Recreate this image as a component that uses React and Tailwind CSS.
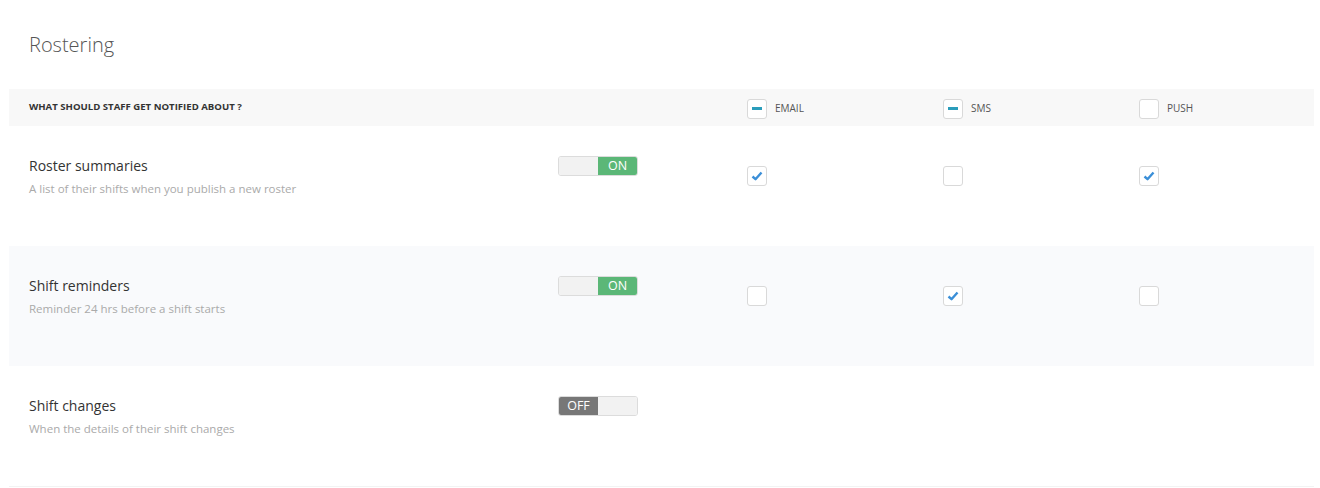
import React from 'react';

const rows = [
  {
    id: 'summaries',
    title: 'Roster summaries',
    desc: 'A list of their shifts when you publish a new roster',
    on: true,
    channels: [true, false, true],
    shaded: false
  },
  {
    id: 'reminders',
    title: 'Shift reminders',
    desc: 'Reminder 24 hrs before a shift starts',
    on: true,
    channels: [false, true, false],
    shaded: true
  },
  {
    id: 'changes',
    title: 'Shift changes',
    desc: 'When the details of their shift changes',
    on: false,
    channels: null,
    shaded: false
  }
];

const Checkbox = ({ state }) => (
  <span className="flex h-[20px] w-[20px] items-center justify-center rounded-[3px] border border-[#d9d9d9] bg-white">
    {state === 'check' && (
      <svg width="12" height="10" viewBox="0 0 12 10">
        <path d="M1.5 5.5 L4.5 8.2 L10.5 1.5" fill="none" stroke="#3b8fd8" strokeWidth="2.4" strokeLinejoin="round" />
      </svg>
    )}
    {state === 'minus' && <span className="h-[3px] w-[10px] bg-[#2a9dbb]" />}
  </span>
);

const Toggle = ({ on }) => (
  <div className="flex h-[20px] w-[80px] overflow-hidden rounded-[3px] border border-[#dcdcdc] text-[12.5px] leading-none text-white">
    {on ? (
      <>
        <span className="flex-1 bg-[#f2f2f2]" />
        <span className="flex flex-1 items-center justify-center bg-[#5bb777]">ON</span>
      </>
    ) : (
      <>
        <span className="flex flex-1 items-center justify-center bg-[#777777]">OFF</span>
        <span className="flex-1 bg-[#f2f2f2]" />
      </>
    )}
  </div>
);

const cols = 'grid grid-cols-[529px_189px_196px_196px_1fr] pl-[20px]';

export default function App() {
  return (
    <div className="min-h-[488px] bg-white px-[9px] pt-[31px] font-['Open_Sans',sans-serif] text-[#333]">
      <h1 className="mb-[30px] pl-[20px] text-[20px] font-light leading-[28px] text-[#555]">Rostering</h1>

      {/* header band */}
      <div className={`${cols} h-[37px] items-center bg-[#f8f8f8] w-[1305px]`}>
        <span className="text-[9.6px] font-bold text-[#333]">WHAT SHOULD STAFF GET NOTIFIED ABOUT ?</span>
        <span />
        <div className="flex items-center gap-[8px] pt-[2px]">
          <Checkbox state="minus" />
          <span className="text-[10px] text-[#555]">EMAIL</span>
        </div>
        <div className="flex items-center gap-[8px] pt-[2px]">
          <Checkbox state="minus" />
          <span className="text-[10px] text-[#555]">SMS</span>
        </div>
        <div className="flex items-center gap-[8px] pt-[2px]">
          <Checkbox state="none" />
          <span className="text-[10px] text-[#555]">PUSH</span>
        </div>
      </div>

      {rows.map((row) => (
        <div
          key={row.id}
          className={`${cols} h-[120px] w-[1305px] items-start ${row.shaded ? 'bg-[#f9fafc]' : 'bg-white'}`}
        >
          <div className="pt-[30px]">
            <p className="text-[14px] leading-[20px] text-[#333]">{row.title}</p>
            <p className="mt-[4px] text-[11.5px] leading-[18px] text-[#aaa]">{row.desc}</p>
          </div>
          <div className="pt-[30px]">
            <Toggle on={row.on} />
          </div>
          {row.channels &&
            row.channels.map((c, i) => (
              <div key={i} className="pt-[40px]">
                <Checkbox state={c ? 'check' : 'none'} />
              </div>
            ))}
        </div>
      ))}
      <div className="h-px w-[1305px] bg-[#f3f3f3]" />
    </div>
  );
}
